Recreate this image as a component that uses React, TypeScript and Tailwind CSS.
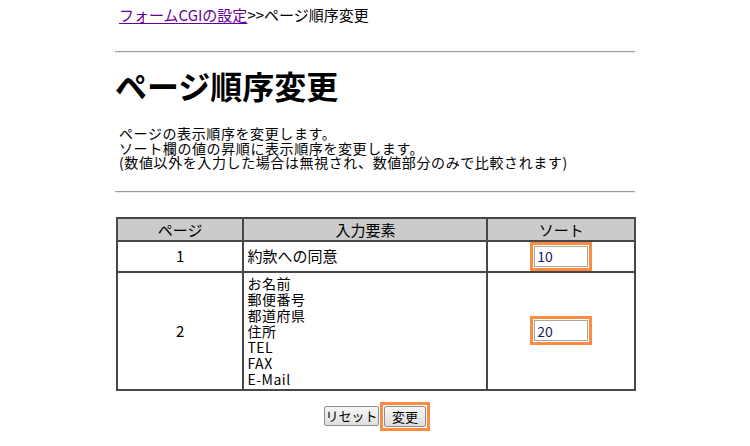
import React from "react";

const font = "font-['Noto_Sans_CJK_JP','Noto_Sans',sans-serif]";

function Hr() {
  return <div className="h-0 border-t border-t-[#9c9c9c] border-b border-b-[#ececec]" />;
}

function SortInput({ value }: { value: string }) {
  return (
    <span className="inline-flex border-[3px] border-[#fd8c42] bg-white p-px">
      <input
        readOnly
        value={value}
        className={`${font} h-[21px] w-[54px] border border-[#a8a8a8] bg-white px-[2px] text-[14px] leading-[19px] text-[#1a1a60] outline-none`}
      />
    </span>
  );
}

export default function App() {
  return (
    <div className={`${font} min-h-[446px] w-[750px] bg-white text-black`}>
      <div className="mx-auto w-[520px]">
        <div className="pl-[4px] pt-[7px] text-[15px] leading-[16px]">
          <a href="#" className="text-[#660099] underline underline-offset-2">
            フォームCGIの設定
          </a>
          <span>&gt;&gt;ページ順序変更</span>
        </div>
        <div className="mt-[28px]">
          <Hr />
        </div>
        <h1 className="mt-[16px] pl-0 text-[32px] font-bold leading-[32px]">ページ順序変更</h1>
        <div className="mt-[25px] pl-[4px] text-[14px] leading-[14.6px] tracking-[0.6px]">
          <p>ページの表示順序を変更します。</p>
          <p>ソート欄の値の昇順に表示順序を変更します。</p>
          <p>(数値以外を入力した場合は無視され、数値部分のみで比較されます)</p>
        </div>
        <div className="mt-[21px]">
          <Hr />
        </div>
        <table className="ml-px mt-[24px] w-[520px] border-collapse text-[15px]">
          <colgroup>
            <col className="w-[127px]" />
            <col className="w-[245px]" />
            <col className="w-[148px]" />
          </colgroup>
          <thead>
            <tr className="bg-[#cbcbcb]">
              <th className="h-[23px] border-2 border-[#474747] p-0 text-center font-normal leading-[19px]">ページ</th>
              <th className="border-2 border-[#474747] p-0 text-center font-normal leading-[19px]">入力要素</th>
              <th className="border-2 border-[#474747] p-0 text-center font-normal leading-[19px]">ソート</th>
            </tr>
          </thead>
          <tbody>
            <tr>
              <td className="border-2 border-[#474747] p-0 text-center align-middle">1</td>
              <td className="border-2 border-[#474747] px-[3px] py-0 align-middle">約款への同意</td>
              <td className="border-2 border-[#474747] p-0 text-center align-middle leading-none">
                <SortInput value="10" />
              </td>
            </tr>
            <tr>
              <td className="border-2 border-[#474747] p-0 text-center align-middle">2</td>
              <td className="border-2 border-[#474747] px-[3px] pb-[2px] pt-[2px] align-middle text-[14px] leading-[16px] tracking-[0.5px]">
                <div>お名前</div>
                <div>郵便番号</div>
                <div>都道府県</div>
                <div>住所</div>
                <div>TEL</div>
                <div>FAX</div>
                <div>E-Mail</div>
              </td>
              <td className="border-2 border-[#474747] p-0 text-center align-middle leading-none">
                <SortInput value="20" />
              </td>
            </tr>
          </tbody>
        </table>
        <div className="mt-[11px] flex items-center justify-center gap-0 pl-[4px]">
          <button className="h-[20px] w-[55px] rounded-[2px] border border-[#8f8f8f] bg-gradient-to-b from-[#f7f7f7] to-[#dedede] p-0 text-[13px] leading-[18px] text-black">
            リセット
          </button>
          <span className="ml-px inline-flex border-[3px] border-[#fd8c42] bg-white p-px">
            <button className="h-[21px] w-[42px] rounded-[2px] border border-[#8f8f8f] bg-gradient-to-b from-[#f7f7f7] to-[#dedede] p-0 text-[13px] leading-[19px] text-black">
              変更
            </button>
          </span>
        </div>
      </div>
    </div>
  );
}
